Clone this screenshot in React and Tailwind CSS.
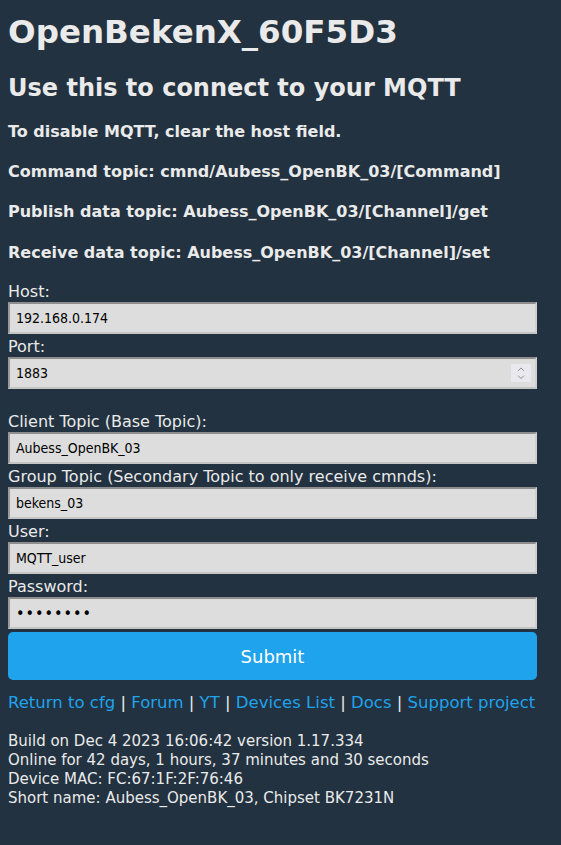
import { ChevronUp, ChevronDown } from 'lucide-react';

// MQTT config page (OpenBeken style)
const condFont = "font-['DejaVu_Sans_Condensed','DejaVu_Sans',sans-serif]";
const sansFont = "font-['DejaVu_Sans',Verdana,sans-serif]";

const Field = ({ label, value, type = 'text', number = false }) => (
  <>
    <label className="block leading-[19px] text-[16px]">{label}</label>
    <div className="relative mt-[1px] mb-[3px]">
      <input
        type={type}
        defaultValue={value}
        readOnly
        className={`block w-full h-[32px] bg-[#dddddd] text-black pl-[6px] pr-2 border-2 border-t-[#8e8e8e] border-l-[#9a9a9a] border-r-[#cfcfcf] border-b-[#c4c4c4] outline-none ${type === 'password' ? 'text-[16px] tracking-[1px]' : 'text-[14px]'} ${condFont}`}
      />
      {number && (
        <div className="absolute right-[6px] top-[7px] w-[20px] h-[18px] bg-[#e8e8ee] flex flex-col items-center justify-center text-[#808080]">
          <ChevronUp className="w-3 h-3 -mb-[3px]" strokeWidth={2} />
          <ChevronDown className="w-3 h-3" strokeWidth={2} />
        </div>
      )}
    </div>
  </>
);

const links = ['Return to cfg', 'Forum', 'YT', 'Devices List', 'Docs', 'Support project'];

export default function App() {
  return (
    <div className={`min-h-[845px] bg-[#223240] text-[#eaeaea] px-2 ${sansFont}`}>
      <div className="w-[529px]">
        <h1 className="font-bold text-[32.5px] leading-[38px] pt-[13px] pb-[2px]">
          OpenBekenX_60F5D3
        </h1>
        <h2 className="font-bold text-[24px] leading-[28px] mt-[21px]">
          Use this to connect to your MQTT
        </h2>
        <div className="font-bold text-[16px] leading-[19px]">
          <h4 className="mt-[20px]">To disable MQTT, clear the host field.</h4>
          <h4 className="mt-[21px]">Command topic: cmnd/Aubess_OpenBK_03/[Command]</h4>
          <h4 className="mt-[21px]">Publish data topic: Aubess_OpenBK_03/[Channel]/get</h4>
          <h4 className="mt-[22px]">Receive data topic: Aubess_OpenBK_03/[Channel]/set</h4>
        </div>

        <form className="mt-[20px]" onSubmit={e => e.preventDefault()}>
          <Field label="Host:" value="192.168.0.174" />
          <Field label="Port:" value="1883" number />
          <div className="h-[20px]" />
          <Field label="Client Topic (Base Topic):" value="Aubess_OpenBK_03" />
          <Field label="Group Topic (Secondary Topic to only receive cmnds):" value="bekens_03" />
          <Field label="User:" value="MQTT_user" />
          <Field label="Password:" value="password" type="password" />
          <button
            type="submit"
            className={`block w-full h-[48px] mt-[1px] rounded-[5px] bg-[#1fa3ec] text-white text-[18px] ${sansFont}`}
          >
            Submit
          </button>
        </form>

        <div className="mt-[13px] text-[16.5px] leading-[19px] whitespace-nowrap">
          {links.map((l, i) => (
            <span key={l}>
              {i > 0 && <span> | </span>}
              <a href="#" className="text-[#1fa3ec]">{l}</a>
            </span>
          ))}
        </div>

        <div className="mt-[20px] text-[15px] leading-[19px]">
          <div>Build on Dec 4 2023 16:06:42 version 1.17.334</div>
          <div>Online for 42 days, 1 hours, 37 minutes and 30 seconds</div>
          <div>Device MAC: FC:67:1F:2F:76:46</div>
          <div>Short name: Aubess_OpenBK_03, Chipset BK7231N</div>
        </div>
      </div>
    </div>
  );
}
